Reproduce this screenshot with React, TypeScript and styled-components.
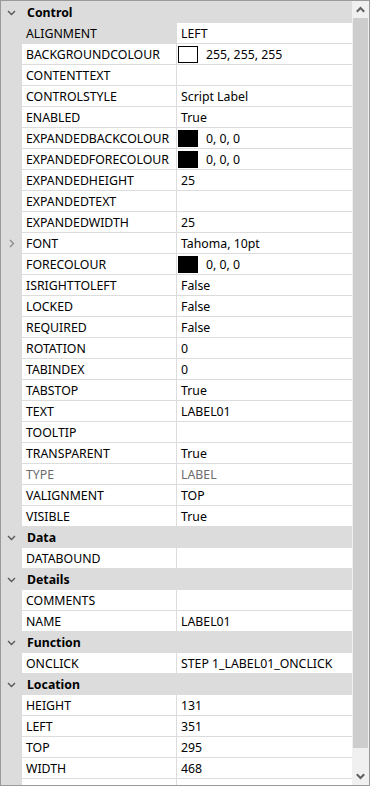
import React from "react";
import styled, { createGlobalStyle } from "styled-components";

const GlobalStyle = createGlobalStyle`
  html, body { margin: 0; padding: 0; background: #ffffff; }
  body { font-family: "Segoe UI", "Noto Sans", "Open Sans", sans-serif; font-size: 12.3px; color: #000; }
`;

const Frame = styled.div`
  width: 370px;
  height: 786px;
  box-sizing: border-box;
  border: 1px solid #9a9a9a;
  display: flex;
  overflow: hidden;
  background: #ffffff;
`;

const Grid = styled.div`
  flex: 1;
  display: flex;
  flex-direction: column;
  padding-top: 1px;
  background: #dcdcdc;
  overflow: hidden;
`;

const CategoryRow = styled.div`
  flex: none;
  height: 21px;
  display: grid;
  grid-template-columns: 21px 1fr;
  align-items: center;
  background: #dcdcdc;
`;

const CategoryTitle = styled.div`
  font-weight: 700;
  padding-left: 5px;
  line-height: 21px;
  white-space: nowrap;
`;

const Glyph = styled.div`
  display: flex;
  align-items: center;
  justify-content: center;
  height: 21px;
`;

const PropRow = styled.div`
  flex: none;
  height: 21px;
  display: grid;
  grid-template-columns: 21px 154px 1px 1fr;
  background: #dcdcdc;
`;

const LabelCell = styled.div<{ $selected?: boolean; $disabled?: boolean }>`
  background: ${(p) => (p.$selected ? "#dcdcdc" : "#ffffff")};
  border-bottom: 1px solid #dcdcdc;
  height: 20px;
  line-height: 21px;
  padding-left: 4px;
  white-space: nowrap;
  overflow: hidden;
  color: ${(p) => (p.$disabled ? "#6d6d6d" : "#000")};
`;

const Divider = styled.div`
  background: #dcdcdc;
`;

const ValueCell = styled.div<{ $disabled?: boolean }>`
  background: #ffffff;
  border-bottom: 1px solid #dcdcdc;
  height: 20px;
  line-height: 21px;
  padding-left: 4px;
  display: flex;
  align-items: center;
  white-space: nowrap;
  overflow: hidden;
  color: ${(p) => (p.$disabled ? "#6d6d6d" : "#000")};
`;

const Swatch = styled.span<{ $color: string }>`
  display: inline-block;
  box-sizing: border-box;
  width: 20px;
  height: 17px;
  margin-left: -3px;
  margin-right: 8px;
  border: 1px solid #000;
  background: ${(p) => p.$color};
  flex: none;
`;

const ScrollBar = styled.div`
  flex: none;
  width: 17px;
  background: #f0f0f0;
  display: flex;
  flex-direction: column;
`;

const ScrollButton = styled.div`
  height: 17px;
  flex: none;
  display: flex;
  align-items: center;
  justify-content: center;
`;

const Thumb = styled.div`
  height: 730px;
  margin: 0 1px;
  background: #cdcdcd;
  flex: none;
`;

const Track = styled.div`
  flex: 1;
`;

const ChevronDown = ({ color = "#555" }: { color?: string }) => (
  <svg width="9" height="6" viewBox="0 0 9 6">
    <path d="M1 1 L4.5 4.5 L8 1" fill="none" stroke={color} strokeWidth="1.3" />
  </svg>
);

const ChevronRight = () => (
  <svg width="6" height="9" viewBox="0 0 6 9">
    <path d="M1 1 L4.5 4.5 L1 8" fill="none" stroke="#8a8a8a" strokeWidth="1.3" />
  </svg>
);

const ArrowUp = () => (
  <svg width="9" height="7" viewBox="0 0 9 7">
    <path d="M0.8 5.8 L4.5 2 L8.2 5.8" fill="none" stroke="#606060" strokeWidth="2" />
  </svg>
);

const ArrowDown = () => (
  <svg width="9" height="7" viewBox="0 0 9 7">
    <path d="M0.8 1.2 L4.5 5 L8.2 1.2" fill="none" stroke="#606060" strokeWidth="2" />
  </svg>
);

type Prop = {
  name: string;
  value?: string;
  swatch?: string;
  expandable?: boolean;
  selected?: boolean;
  disabled?: boolean;
};

type Category = { title: string; props: Prop[] };

const data: Category[] = [
  {
    title: "Control",
    props: [
      { name: "ALIGNMENT", value: "LEFT", selected: true },
      { name: "BACKGROUNDCOLOUR", value: "255, 255, 255", swatch: "#ffffff" },
      { name: "CONTENTTEXT" },
      { name: "CONTROLSTYLE", value: "Script Label" },
      { name: "ENABLED", value: "True" },
      { name: "EXPANDEDBACKCOLOUR", value: "0, 0, 0", swatch: "#000000" },
      { name: "EXPANDEDFORECOLOUR", value: "0, 0, 0", swatch: "#000000" },
      { name: "EXPANDEDHEIGHT", value: "25" },
      { name: "EXPANDEDTEXT" },
      { name: "EXPANDEDWIDTH", value: "25" },
      { name: "FONT", value: "Tahoma, 10pt", expandable: true },
      { name: "FORECOLOUR", value: "0, 0, 0", swatch: "#000000" },
      { name: "ISRIGHTTOLEFT", value: "False" },
      { name: "LOCKED", value: "False" },
      { name: "REQUIRED", value: "False" },
      { name: "ROTATION", value: "0" },
      { name: "TABINDEX", value: "0" },
      { name: "TABSTOP", value: "True" },
      { name: "TEXT", value: "LABEL01" },
      { name: "TOOLTIP" },
      { name: "TRANSPARENT", value: "True" },
      { name: "TYPE", value: "LABEL", disabled: true },
      { name: "VALIGNMENT", value: "TOP" },
      { name: "VISIBLE", value: "True" },
    ],
  },
  { title: "Data", props: [{ name: "DATABOUND" }] },
  { title: "Details", props: [{ name: "COMMENTS" }, { name: "NAME", value: "LABEL01" }] },
  { title: "Function", props: [{ name: "ONCLICK", value: "STEP 1_LABEL01_ONCLICK" }] },
  {
    title: "Location",
    props: [
      { name: "HEIGHT", value: "131" },
      { name: "LEFT", value: "351" },
      { name: "TOP", value: "295" },
      { name: "WIDTH", value: "468" },
      { name: "" },
    ],
  },
];

export default function App() {
  return (
    <>
      <GlobalStyle />
      <Frame>
        <Grid>
          {data.map((cat) => (
            <React.Fragment key={cat.title}>
              <CategoryRow>
                <Glyph>
                  <ChevronDown />
                </Glyph>
                <CategoryTitle>{cat.title}</CategoryTitle>
              </CategoryRow>
              {cat.props.map((p, i) => (
                <PropRow key={cat.title + i}>
                  <Glyph>{p.expandable ? <ChevronRight /> : null}</Glyph>
                  <LabelCell $selected={p.selected} $disabled={p.disabled}>
                    {p.name}
                  </LabelCell>
                  <Divider />
                  <ValueCell $disabled={p.disabled}>
                    {p.swatch ? <Swatch $color={p.swatch} /> : null}
                    {p.value}
                  </ValueCell>
                </PropRow>
              ))}
            </React.Fragment>
          ))}
        </Grid>
        <ScrollBar>
          <ScrollButton>
            <ArrowUp />
          </ScrollButton>
          <Thumb />
          <Track />
          <ScrollButton>
            <ArrowDown />
          </ScrollButton>
        </ScrollBar>
      </Frame>
    </>
  );
}
